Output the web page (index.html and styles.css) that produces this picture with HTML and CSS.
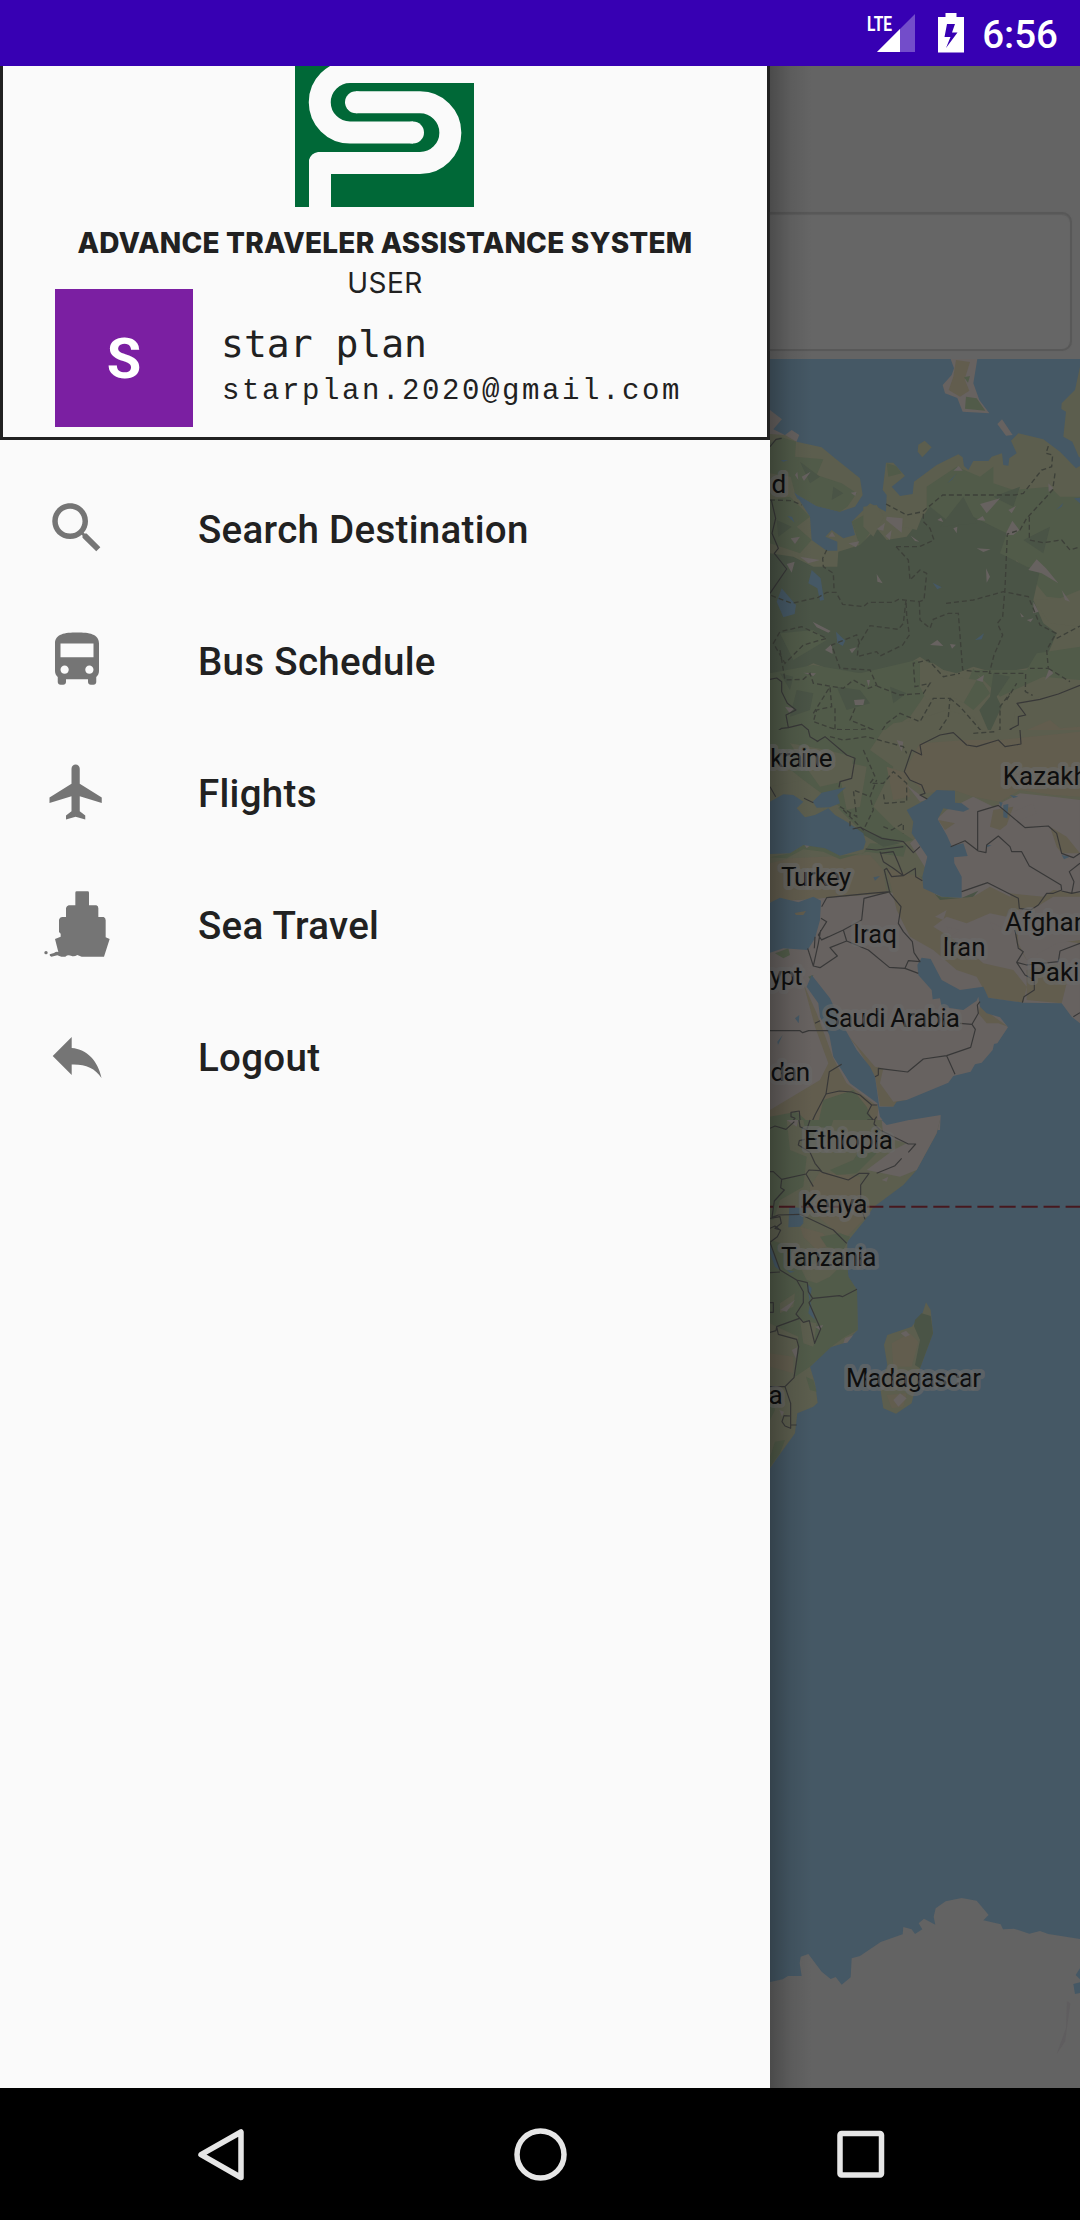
FILE: index.html
```html
<!DOCTYPE html>
<html lang="en">
<head>
<meta charset="utf-8">
<title>Advance Traveler Assistance System</title>
<link rel="stylesheet" href="styles.css">
</head>
<body>
<div class="screen">
  <header class="status-bar">
    <svg class="signal" width="50" height="40" viewBox="866 13 50 40">
      <path d="M914 14V52H876Z" fill="#fff" fill-opacity=".3"/>
      <path d="M899 29V52H876Z" fill="#fff"/>
      <text class="lte" x="866" y="31" textLength="25" lengthAdjust="spacingAndGlyphs">LTE</text>
    </svg>
    <svg class="battery" width="26" height="40" viewBox="937 13 26 40">
      <path fill-rule="evenodd" fill="#fff" d="M944.500 13H955.500V17H963V52.500H937V17H944.500ZM946 24L943.500 37H949.500L945 48L956.500 32.500H951L954 24Z"/>
    </svg>
    <span class="clock">6:56</span>
  </header>

  <main class="content">
    <nav class="drawer">
      <section class="profile">
        <svg class="logo" width="179" height="141" viewBox="295 66 179 141">
          <rect x="295" y="66" width="179" height="141" fill="#006837"/>
          <g fill="none" stroke="#fafafa" stroke-width="22">
            <path d="M480 72H350A30.200 30.200 0 0 0 350 132.500H413"/>
            <path d="M356 102.300H420A30.300 30.300 0 0 1 420 163H340"/>
          </g>
          <circle cx="413" cy="132.500" r="11" fill="#fafafa"/>
          <circle cx="356" cy="102.300" r="11" fill="#fafafa"/>
          <path d="M309 207V160Q311 153 318 152H345V174H331V207Z" fill="#fafafa"/>
        </svg>
        <h1 class="title">ADVANCE TRAVELER ASSISTANCE SYSTEM</h1>
        <p class="role">USER</p>
        <div class="account">
          <div class="avatar">S</div>
          <div class="identity">
            <p class="name">star plan</p>
            <p class="email">starplan.2020@gmail.com</p>
          </div>
        </div>
      </section>

      <ul class="menu">
        <li class="item">
          <svg class="icon" viewBox="0 0 24 24"><path d="M15.5 14h-.79l-.28-.27C15.410 12.590 16 11.110 16 9.500 16 5.910 13.090 3 9.500 3S3 5.910 3 9.500 5.910 16 9.500 16c1.610 0 3.090-.59 4.230-1.570l.27.28v.79l5 4.990L20.490 19l-4.990-5zm-6 0C7.010 14 5 11.990 5 9.500S7.010 5 9.500 5 14 7.010 14 9.500 11.990 14 9.500 14z"/></svg>
          <span>Search Destination</span>
        </li>
        <li class="item">
          <svg class="icon" viewBox="0 0 24 24"><path d="M4 16c0 .88.39 1.670 1 2.220V20c0 .55.45 1 1 1h1c.55 0 1-.45 1-1v-1h8v1c0 .55.45 1 1 1h1c.55 0 1-.45 1-1v-1.780c.61-.55 1-1.340 1-2.220V6c0-3.500-3.580-4-8-4s-8 .5-8 4v10zm3.500 1c-.83 0-1.500-.67-1.500-1.500S6.670 14 7.500 14s1.500.67 1.500 1.500S8.330 17 7.500 17zm9 0c-.83 0-1.500-.67-1.500-1.500s.67-1.500 1.500-1.500 1.500.67 1.500 1.500-.67 1.500-1.500 1.500zm1.500-6H6V6h12v5z"/></svg>
          <span>Bus Schedule</span>
        </li>
        <li class="item">
          <svg class="icon" viewBox="0 0 24 24"><path d="M21 16v-2l-8-5V3.500c0-.83-.67-1.500-1.500-1.500S10 2.670 10 3.500V9l-8 5v2l8-2.500V19l-2 1.500V22l3.500-1 3.500 1v-1.500L13 19v-5.500l8 2.500z"/></svg>
          <span>Flights</span>
        </li>
        <li class="item">
          <svg class="icon" viewBox="132 93 198 198"><path d="M230 94H263Q267 94 267 98V136H289Q295 138 295 145V171H311Q317 174 317 181V232L329 237L312 290H245L232 285Q222 291 213 287Q203 284 196 290H184L172 286L154 290Q148 289 149 283L162 279Q169 273 175 276L165 237L182 230V221L177 216V179Q179 172 186 171H198V144Q200 138 206 136H226V98Q226 94 230 94Z"/><circle cx="138" cy="278" r="5"/></svg>
          <span>Sea Travel</span>
        </li>
        <li class="item">
          <svg class="icon" viewBox="0 0 66 66"><path d="M8.700 33L27.700 14V25C43 26 54 38 57.500 55C51 45 41 41 27.700 41.500V52Z"/></svg>
          <span>Logout</span>
        </li>
      </ul>
    </nav>

    <section class="page">
      <div class="search-card"></div>
      <svg class="map" width="310" height="1729" viewBox="770 359 310 1729">
        <rect class="water" x="770" y="359" width="310" height="1729"/>

        <!-- northern Eurasia -->
        <g transform="translate(760 340) scale(.33333)">
          <path class="desert" d="M30 210L66 238L40 268L75 285L95 270L118 285L108 308L30 330Z"/>
          <path class="steppe" d="M30 282L75 285L110 305L185 322L225 355L300 415L308 465L285 500L240 515L170 498L105 460L150 530L155 600L200 632H232V605L196 590L215 570L250 595L285 585L275 545L330 490L378 515L380 465L368 450L378 368H400L435 408L395 440L420 468L458 462L462 425L530 375L595 343L608 352L612 378L625 390L640 363H685L695 350L726 340L730 375L745 377L748 355L770 340L753 302L775 280L850 298L900 335L948 385L960 378V1200H30Z"/>
          <path class="steppe" d="M960 80L945 150L905 190L904 207L918 215L910 290L937 305L957 352H960Z"/>
          <path class="desert" d="M572 57H652L640 130L658 180L688 220L608 215L592 174L555 160L548 135L575 105L582 85Z"/>
          <path class="sand" d="M588 60L630 66L614 118L628 152L600 170L566 150L580 110Z"/>
          <path class="mid" d="M618 170L650 175L676 212L615 206ZM612 112L630 108L624 128Z"/>
          <path class="desert" d="M726 238L758 285L738 287L712 252Z"/>
          <path class="steppe" d="M494 302L515 322L487 352L473 335L475 314Z"/>
          <path class="mid" d="M30 310L60 290L108 305L105 350L190 358L170 405L245 430L290 460L262 500L240 515L170 498L105 460L92 410L30 400ZM30 480L90 470L150 530L110 560L155 600L120 640L30 610ZM500 440L590 380L660 410L700 380L700 430L760 450L870 440L900 470H960V780L860 770L770 660L740 700L500 560ZM380 370L408 378L425 400L385 410ZM275 545L330 515L350 550L300 620Z"/>
          <path class="forest" d="M30 640L100 650L160 680L232 680L235 635L300 615L350 565L380 600L440 590L510 500L560 540L640 530L700 560L740 580L720 640L800 680L840 690L820 780L850 850L890 880L860 950L800 985L710 1000L640 980L590 1000L530 985L480 950L430 980L340 1000L240 1000L160 970L80 1010L30 1000Z"/>
          <path class="mid" d="M30 1000L160 975L300 1000L470 960L540 1000L450 1130L340 1200H30ZM60 880L160 870L200 900L100 960ZM640 990L800 990L830 940L960 920V1020L850 1010L720 1070ZM640 985L690 1060L640 1110L600 1080Z"/>
          <path class="forest" d="M700 1000L750 1010L710 1070L725 1100L688 1180L658 1110L690 1070ZM110 1050L160 1060L150 1110L90 1130ZM230 1040L300 1050L330 1090L260 1110ZM60 1000L100 1010L90 1050ZM390 1040L440 1060L400 1090ZM120 365L180 410L150 430ZM50 540L95 560L55 590ZM220 440L250 460L215 480ZM540 560L610 470L650 550ZM700 470L780 440L760 500ZM790 600L870 560L850 640Z"/>
          <path class="steppe" d="M820 780L900 775L960 750V860L870 850ZM480 965L520 970L580 1010L650 1020L610 1090L560 1060L500 1080L480 1040ZM770 1090L960 1035V1200H750ZM340 1200L400 1150L470 1140L560 1110L640 1130L680 1190L690 1200ZM310 500L350 495L372 530L340 590L310 560ZM430 530L490 520L470 570L430 560Z"/>
          <path class="sand" d="M540 1200L580 1180L690 1190L800 1170L870 1140L900 1165L960 1160V1200Z"/>
          <path class="desert" d="M380 530L428 535L425 578L378 540ZM395 570L390 600L376 588ZM452 587L478 605L465 603ZM740 575L757 542L778 570L760 585L738 585ZM650 625L692 628L670 636ZM350 702L368 730L352 725ZM678 685L690 710L680 728ZM805 690L830 658L858 685L895 730L845 700ZM905 750L930 785L915 780ZM820 785L836 815L820 820ZM510 915L532 900L550 918ZM570 912L588 914L576 926ZM268 928L290 922L276 940ZM158 845L212 873L205 878L170 862ZM195 930L215 912L218 942ZM282 1080L314 1078L310 1095H285ZM92 595L120 590L105 612ZM120 650L180 660L145 670ZM80 672L104 665L95 698ZM272 458L290 455L286 468ZM580 392L596 378L608 392ZM660 492L720 475L680 520ZM580 565L592 560L590 580ZM532 540L543 533L550 546ZM650 540L668 528L676 542ZM855 1020L868 985L880 1000ZM780 818L792 830L785 832ZM800 840L820 835L812 846ZM130 998L168 1000L160 1008ZM648 1020L672 1005L668 1026ZM105 405L112 395L115 420ZM125 410L152 395L132 423ZM265 610L298 604L288 622ZM205 590L216 575L226 590ZM350 568L375 548L370 572ZM320 1020L330 1020L326 1040ZM75 1100L104 1105L88 1118ZM865 430L880 445L866 455ZM745 510L768 498L755 520Z"/>
          <path class="water" d="M50 785L65 745L108 795L104 822L70 832ZM145 730L155 690L182 715L192 780L180 782L172 745ZM228 875L256 902L248 918L232 908ZM645 900L672 880L665 898ZM518 728L545 742L532 748ZM82 528L96 530L104 548ZM62 360L84 360L70 366ZM888 510L910 488L905 500ZM562 430L590 400L575 420ZM102 456L125 480L112 476ZM942 475L960 473V490Z"/>
          <path class="region" d="M30 480L95 482L125 495M378 492L440 525L488 515L548 465H765L790 460L845 390L875 380L878 345L858 340L865 318M885 400L878 450L800 535L780 570L742 582L735 745L728 830L712 850L728 885L702 945L688 1000H797L796 1055L818 1066M408 620H478L522 600L510 565L490 545V515M408 620L445 660L450 720L480 690L500 700L492 780L478 785L415 778L400 787H325L310 800L248 793L228 757L200 757L175 772L95 790L30 765M222 745L220 700L190 680L188 655L200 630M438 780L430 850L415 868L330 857L295 915L292 950L350 935L360 948L428 915L448 885L440 825ZM478 785L480 840L510 865L520 838L565 820H595L608 990L650 995H688M558 790L640 780L730 755L805 770L840 855L888 880L860 930L865 985L810 985M40 910L60 875L125 860L200 895L130 915L75 970ZM60 930L75 1020L130 1018L150 1000L160 1030L250 1045L280 1020L325 1045L350 1035L330 990L240 985L215 915L290 885L300 915M160 1120L210 1040L215 1100L170 1110L160 1145L225 1168L290 1170L330 1165L360 1180L380 1150L420 1120L480 1145L520 1075L570 1075L565 1130L535 1175M350 1038L420 1065L490 1060L510 1030L465 1040L460 970L505 960L550 1010L600 1000M570 1075L600 1100L670 1180L720 1170V1100L750 1060M740 1080L770 1030M808 530V600L850 608L905 600L930 630L960 620M890 895L960 858M865 985L930 1025M285 1105L270 1140L330 1165M225 1105V1200"/>
          <path class="border" d="M30 320L48 298L65 295M34 480L47 535L36 580L55 625L43 640L80 687L30 760M30 1018L50 1014L65 1025V1055L82 1090L108 1110L78 1125L85 1163L125 1153L145 1170L148 1200M30 1190L65 1165L85 1163M500 1200L530 1175L548 1187L570 1175L602 1200M960 1036L895 1062L840 1078L771 1090L797 1125L775 1130V1155L750 1168L785 1190L780 1200"/>
        </g>

        <!-- Middle East and Horn of Africa -->
        <g transform="translate(760 730) scale(.33333)">
          <path class="desert" d="M30 0H960V1200H30Z"/>
          <path class="steppe" d="M30 0H960V210L880 200L780 190L700 230L640 200L560 240L450 340L500 420L470 480L380 490L180 505L30 515Z"/>
          <path class="mid" d="M30 0H370L330 60L400 110L340 230L400 290L460 330L370 350L300 300L230 230L130 150L30 70Z"/>
          <path class="steppe" d="M30 170L130 150L240 230L210 250L130 200L50 215L30 240ZM90 40L200 60L280 80L270 150L180 170L130 100ZM230 90L320 110L300 230L260 240Z"/>
          <path class="sand" d="M480 40L620 30L720 30L960 5V200L880 195L780 180L720 215L640 200L580 180L500 190L430 130ZM380 110L440 130L450 200L400 210ZM30 400L90 385L190 380L330 375L370 420L380 490L180 505L30 515Z"/>
          <path class="mid" d="M30 382L90 370L130 345L195 352L240 377L310 370L330 340L440 345L430 380L320 365L240 388L190 365L130 358L80 385ZM460 440L487 440L492 480L545 500L603 503L600 522L530 510L480 490Z"/>
          <path class="forest" d="M200 250L280 290L420 340L370 350L320 320ZM490 475L545 503L603 505L655 482L640 500L590 522L530 512Z"/>
          <path class="sand" d="M380 415L480 440L540 510L640 500L690 470L770 510L740 560L690 550L620 580L560 560L520 590L600 640L670 700L760 720L800 770L790 818L685 803L650 740L590 720L520 660L450 620L410 540ZM130 760L170 850L220 985L260 1060L355 1130L350 1200H30V1140L180 1050L205 1000L165 890ZM255 905L345 1010L370 1015L360 1060L400 1115L440 1110L400 1130L360 1128L345 1040L290 950ZM660 830L744 890L715 880L680 880L655 850ZM750 490L850 500L880 480L960 490V640L880 630L800 690L770 640ZM800 720L900 700L920 760L905 820L800 810ZM700 240L760 230L740 285L720 300L690 290ZM870 290L920 320L960 370H905L890 350ZM535 270L585 280L555 300Z"/>
          <path class="desert" d="M560 590L600 600L570 620ZM610 640L650 690L620 680ZM690 575L740 600L700 600ZM750 250L820 220L830 250L780 270ZM130 340L160 338L140 355ZM70 352L90 340L85 370ZM410 30L430 35L425 65ZM440 165L500 210L480 215ZM525 560L560 540L550 570ZM770 540L830 530L880 500L960 500V630L890 640L800 690L775 640Z"/>
          <path class="mid" d="M45 670L85 655L90 675L70 685ZM30 1160L110 1145L170 1200H30ZM190 1110L280 1080L320 1130L350 1200H170ZM145 740L160 735L155 755Z"/>
          <path class="water" d="M30 215L70 193L100 195L130 215L110 235L135 262L165 255L205 235L225 255L260 275L310 310L317 335L310 358L240 377L195 355L130 345L90 370L30 372Z"/>
          <path class="water" d="M158 215L185 188L258 172L232 195L240 220L210 232L170 233Z"/>
          <path class="water" d="M440 240L500 208L530 180L585 182V218L605 220L628 237L610 245L550 235L533 268L560 315L575 348L610 340L623 378L582 382L583 400L605 440V503L545 500L490 475L487 440L502 380L455 310L460 275Z"/>
          <path class="water" d="M30 518L60 503L115 517L160 500L183 512L180 570L165 625L143 660L70 655L30 668Z"/>
          <path class="water" d="M472 705L485 683L512 687L545 750L600 780L670 770L685 803L790 818L905 820L935 860L960 880V1200H540L542 1155L450 1170L380 1185L360 1160L352 1120L270 1060L220 980L208 915L180 860L175 820L140 770L155 735L210 805L240 870L290 960L330 1010L345 1040L358 1130H400L410 1115L440 1110L565 1058L580 1038L632 1025L645 1003L665 998L698 960L702 942L712 940L744 892L720 862L680 850L660 830L655 800L650 812L610 840L545 830L540 805L518 808L515 780L475 735Z"/>
          <path class="water" d="M730 225L745 222L742 265L730 262ZM750 195L775 200L760 204ZM680 345L695 345L682 352ZM905 375L930 380L912 388ZM340 442L360 438L345 452ZM105 865L118 855L116 880ZM52 935L68 915L54 945ZM718 215L728 218L722 235Z"/>
          <path class="sand" d="M104 549L138 543L130 555H108Z"/>
          <path class="region" d="M210 20L250 30L320 20L430 50L440 70M310 60L345 140L330 160L370 160L400 125L440 160L440 215L375 220L370 190M240 230L290 260L280 180L330 200L350 150M250 240L310 300L340 240L330 200M370 290L395 300L430 280V310M270 250V290M640 10L705 5"/>
          <path class="border" d="M170 35L195 20L260 75L285 85L275 145L240 155L237 172M145 0L150 20L175 35M132 205L160 218M30 170L47 200M780 0L783 42L735 50L715 30L650 50L620 45L580 8L540 15L480 45L485 75L455 60L433 125L450 150L485 165L495 190L480 195L502 207M278 297L300 292L365 325L430 335L460 368L480 350M317 357L350 360L430 350M360 365L370 395L400 415L430 437L466 415L467 440L487 452M360 370L400 365L415 400L430 437L395 440L380 415L373 420L390 490L423 530L415 580L430 605L457 635L462 668L480 695L445 692L435 715L475 730M435 715L388 712L325 660L260 633L250 600L185 630L175 615L200 575L183 565M250 600L305 570L312 505L390 485L330 490L200 503L185 530M260 633L210 653L232 678L180 713L160 708L143 655M182 600L175 640L160 708M165 620L163 655M183 630L205 620M572 350L615 332L655 363L678 368L680 345L715 318L750 350L755 365H785L808 408L903 465L905 480L880 490L860 490L835 525L812 540L778 535L775 505L745 490L683 458L605 485M653 363V245L715 226L795 293L865 288L890 310L905 370L940 383L960 370M960 400L928 425L942 455L935 490L905 483M935 490L960 485M765 600L775 655L790 665L770 697L800 705L895 695L900 663L960 640M770 697L795 735L823 750V780L792 800L787 818M30 902H120L128 908L146 902H205M165 880L180 872M345 1040L355 1035V1015L443 1026L490 987L560 977L632 952L646 898L636 883L600 880M636 883L655 850L652 825L660 815M560 977L585 1033M198 1092L208 1025L245 1003M145 1200L165 1155L198 1092L238 1083L275 1086L300 1095L335 1125H352M335 1125L322 1150L340 1170H322M350 1160L340 1175L352 1190M30 1195L45 1188L75 1198L105 1165L93 1160V1147L118 1143L120 1170L118 1200M940 860L960 848"/>
        </g>

        <!-- East Africa -->
        <g transform="translate(760 1120) scale(.33333)">
          <path class="steppe" d="M30 0H540L530 40L470 150L430 195L340 262L315 300L262 365L262 440L265 470L291 510L293 630L255 668L212 682L150 740L165 790L173 848L160 860L112 880L105 940L65 995L30 1045Z"/>
          <path class="desert" d="M365 0H540L530 40L470 150L420 170L320 150L400 90L440 70L370 50ZM165 180L190 185L190 210L165 205ZM215 195L240 190L260 205L230 212ZM95 690L115 680L110 720ZM365 180L385 170L380 185ZM80 0L115 0L110 20Z"/>
          <path class="sand" d="M180 155L300 170L300 260L330 270L310 300L260 350L210 320L150 270L150 200ZM120 320L190 340L210 375L170 390L130 350ZM30 700L100 710L100 760L30 740Z"/>
          <path class="mid" d="M30 0H80L90 90L140 110L130 200L60 240L40 300L30 300ZM130 0H220L200 60L150 90L140 50ZM210 150L280 120L300 90L350 100L290 160L230 165ZM30 360L100 380L130 400L260 410L265 470L291 510L293 630L255 650L212 682L150 740L105 770L115 650L50 620L30 610ZM180 350L240 340L270 350L250 390L200 380ZM138 770L160 780L170 815L150 810ZM30 800L45 870L30 900ZM45 965L75 960L60 1000L30 1040V1010Z"/>
          <path class="steppe" d="M120 440L170 430L230 450L210 470L170 490L140 480ZM120 600L170 610L160 680L130 670ZM60 550L105 520L100 560L60 580Z"/>
          <path class="desert" d="M255 655L280 645L262 668L250 670ZM60 570L105 540L80 575ZM165 620L190 615L180 630ZM58 870L72 875L66 890Z"/>
          <path class="water" d="M88 260L130 265V310L120 320L85 322ZM365 0L380 15L447 0ZM30 370L40 400L60 450L45 440L30 400ZM140 490L155 505L150 540L165 600L145 580L150 550ZM80 450L105 455L90 458Z"/>
          <path class="steppe" d="M498 547L512 570L519 640L480 745L455 850L408 881L370 865L360 800L382 735L372 675L382 645L455 620L488 578Z"/>
          <path class="sand" d="M395 670L450 640L475 665L455 740L400 740ZM380 825L440 820L430 860L395 865Z"/>
          <path class="forest" d="M465 600L485 580L512 588L519 640L480 745L465 735L480 660L462 618Z"/>
          <path class="desert" d="M422 640L438 632L450 645L436 651ZM400 840L420 820L440 835L415 860Z"/>
          <path class="border" d="M30 25L45 18L78 28L103 5M117 0L120 20L140 30L150 0M345 0L342 12L360 30L445 72H467L445 97M425 115L405 137L350 160M135 58L118 62L115 75L150 97L165 130L187 157L265 180L298 160H327L302 195V260L315 298M187 157L180 152L147 150L138 162L65 178L40 155H30M65 178L62 203L73 210L43 243L36 292L55 285L120 283L220 330L260 370M138 162L160 200M30 295L60 290L64 310L45 325L62 330L52 350L30 367L60 450L110 480L142 488L145 515L158 535L238 527L247 530L291 508M30 458L60 456M30 325L45 318L60 330M110 480L130 515V548L108 582L130 607L148 602L164 670L182 627L147 548L158 535M118 595L50 620L55 643L110 658L116 680L102 773L75 800H30M50 620L48 632L30 637M75 800L92 850V925L75 918L66 905L72 887L90 888M92 915H110M30 548H40V577H30"/>
        </g>

        <!-- Antarctica -->
        <g transform="translate(760 1860) scale(.33333)">
          <path class="ice" d="M30 366L68 358L84 348H125L119 310L122 290L145 282L185 335L212 357L227 351L245 374L272 352L275 295L300 288L362 246L428 223L430 201L455 208L465 222L487 208L476 190L492 176L526 194L521 170L527 145L557 124L605 114L650 122L686 165L670 181L722 193L729 208L762 206L808 221L840 213L865 222L960 237V325L947 345L960 358V367L940 372L945 402L960 399V690H30Z"/>
          <path d="M921 424L931 430L915 545L890 582L918 505Z" fill="#5f5d5f"/>
        </g>

        <path class="equator" d="M756.900 1206.800H1080"/>

        <g class="labels">
          <text x="771.500" y="492.500">d</text>
          <text x="770" y="766.500" textLength="62.500">kraine</text>
          <text x="1002.800" y="785">Kazakh</text>
          <text x="781" y="886" textLength="70">Turkey</text>
          <text x="853" y="943" textLength="44">Iraq</text>
          <text x="942.500" y="956" textLength="43">Iran</text>
          <text x="1005" y="931">Afghan</text>
          <text x="1029.500" y="981">Pakis</text>
          <text x="770" y="985" textLength="32.500">ypt</text>
          <text x="824.500" y="1027" textLength="135.500">Saudi Arabia</text>
          <text x="770.500" y="1081" textLength="39.500">dan</text>
          <text x="804" y="1149" textLength="89">Ethiopia</text>
          <text x="801" y="1213" textLength="66.500">Kenya</text>
          <text x="781" y="1266" textLength="95.500">Tanzania</text>
          <text x="846" y="1387" textLength="135">Madagascar</text>
          <text x="768.500" y="1404">a</text>
        </g>
      </svg>
    </section>
  </main>

  <footer class="system-nav">
    <svg width="320" height="132" viewBox="60 2088 320 132"><path d="M241 2132V2177.500L201 2154.700Z"/></svg>
    <svg width="320" height="132" viewBox="380 2088 320 132"><circle cx="540.500" cy="2154.500" r="23.500"/></svg>
    <svg width="320" height="132" viewBox="700 2088 320 132"><rect x="840" y="2133.500" width="41.500" height="41.500" rx="1.500"/></svg>
  </footer>
</div>
</body>
</html>
```
FILE: styles.css
```css
* { box-sizing: border-box; margin: 0; padding: 0; }

body {
  width: 1080px;
  height: 2220px;
  overflow: hidden;
  background: #000;
  color: #212121;
  font-family: Roboto, sans-serif;
}

.screen { display: flex; flex-direction: column; height: 2220px; }

.status-bar {
  height: 66px;
  flex: none;
  display: flex;
  align-items: flex-start;
  justify-content: flex-end;
  padding: 13px 22px 0 0;
  background: #3700b3;
  color: #fff;
}
.battery { margin-left: 21px; }
.clock { margin: -1px 0 0 18px; font-size: 38.5px; line-height: 46px; font-weight: 500; }
.lte { font: 700 21px Roboto, sans-serif; fill: #fff; }

.content { display: flex; height: 2022px; flex: none; }

.drawer { width: 770px; flex: none; background: #fafafa; }

.profile {
  display: flex;
  flex-direction: column;
  height: 374px;
  border: solid #212121;
  border-width: 0 3px 3px;
}
.logo { display: block; margin-left: 292px; flex: none; }
.title {
  margin-top: 19px;
  text-align: center;
  white-space: nowrap;
  font: 800 28px/34px Inter, sans-serif;
  letter-spacing: 0.2px;
}
.role {
  height: 40px;
  text-align: center;
  font: 400 28px/47px Inter, sans-serif;
  letter-spacing: 0.5px;
}
.account { display: flex; margin: -11px 0 0 52px; }
.avatar {
  width: 138px;
  height: 138px;
  background: #7b1fa2;
  color: #fff;
  text-align: center;
  font: 700 56px/140px Roboto, sans-serif;
}
.identity { padding: 32px 0 0 28px; white-space: nowrap; }
.name { font: 38px/46px "DejaVu Sans Mono", monospace; }
.email {
  padding-left: 1px;
  font: 29px/50px "Liberation Mono", monospace;
  letter-spacing: 2.6px;
}

.menu { list-style: none; padding-top: 22px; }
.item {
  display: flex;
  align-items: center;
  gap: 88px;
  height: 132px;
  padding-left: 44px;
  font-size: 38.5px;
  font-weight: 500;
  letter-spacing: 0.3px;
}
.item span { padding-top: 2px; }
.icon { width: 66px; height: 66px; fill: #757575; }

.page { position: relative; width: 310px; padding-top: 146px; background: #646464; }
.page::after {
  content: "";
  position: absolute;
  inset: 0 auto 0 0;
  width: 42px;
  background: linear-gradient(to right, rgba(0, 0, 0, .25), rgba(0, 0, 0, .08) 50%, transparent);
}
.search-card {
  width: 302px;
  height: 139px;
  margin-bottom: 8px;
  border: 2px solid #585858;
  border-left: 0;
  border-radius: 0 10px 10px 0;
  background: #666;
  box-shadow: inset 0 1px 1px #5c5c5c, 0 0 1px #5f5f5f;
}
.map { display: block; }

.water { fill: #455865; }
.steppe { fill: #5c5e4e; }
.sand { fill: #625d4e; }
.mid { fill: #515b49; }
.forest { fill: #4a5446; }
.desert { fill: #676260; }
.ice { fill: #636363; }
.border { fill: none; stroke: #383838; stroke-width: 3.5; stroke-linejoin: round; }
.region { fill: none; stroke: #3d4039; stroke-width: 4; stroke-dasharray: 15 9; }
.equator { fill: none; stroke: #47181f; stroke-width: 2; stroke-dasharray: 16.200 5.850; }
.labels {
  font: 400 26px Roboto, sans-serif;
  fill: #0e0e0e;
  stroke: rgba(105, 105, 104, .65);
  stroke-width: 8px;
  stroke-linejoin: round;
  paint-order: stroke;
}

.system-nav { display: flex; justify-content: center; height: 132px; background: #000; }
.system-nav svg { fill: none; stroke: #e6e6e6; stroke-width: 5.500; stroke-linejoin: round; }
```
